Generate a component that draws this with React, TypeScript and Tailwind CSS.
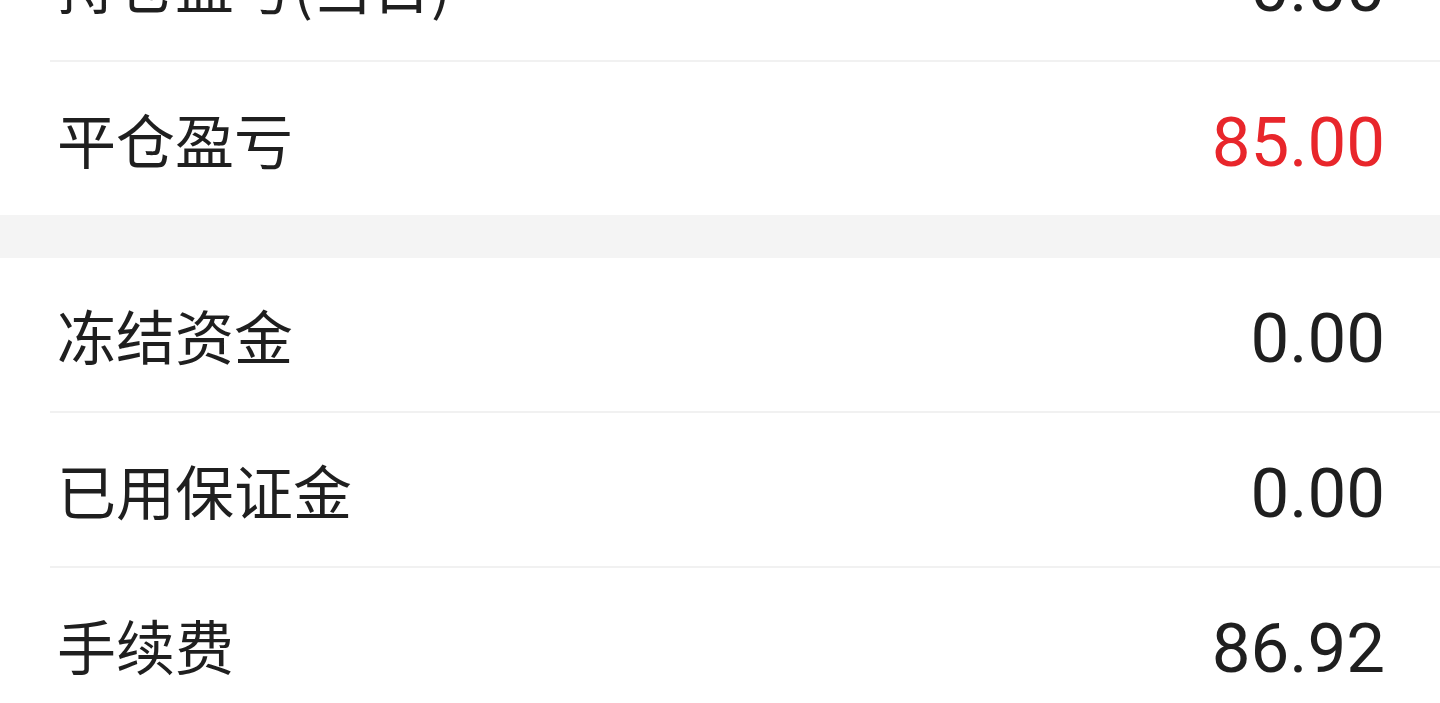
export default function App() {
  const top = [
    { label: "持仓盈亏(当日)", value: "0.00", red: false },
    { label: "平仓盈亏", value: "85.00", red: true },
  ];
  const bottom = [
    { label: "冻结资金", value: "0.00", red: false },
    { label: "已用保证金", value: "0.00", red: false },
    { label: "手续费", value: "86.92", red: false },
  ];

  const Row = ({ label, value, red, line }: { label: string; value: string; red: boolean; line: boolean }) => (
    <div className="flex flex-col">
      <div className="flex h-[153px] items-center justify-between pl-[57px] pr-[55px]">
        <span className="text-[59px] leading-none text-[#1f1f1f] [font-family:'Noto_Sans_CJK_SC',sans-serif]">
          {label}
        </span>
        <span
          className={
            "pt-[8px] text-[69px] leading-none [font-family:Roboto,'Noto_Sans',sans-serif] " +
            (red ? "text-[#e8262b]" : "text-[#1f1f1f]")
          }
        >
          {value}
        </span>
      </div>
      {line && <div className="ml-[50px] h-[2px] bg-[#f1f1f1]" />}
    </div>
  );

  return (
    <div className="h-[703px] w-[1440px] overflow-hidden bg-white">
      <div className="-mt-[93px]">
        {top.map((r, i) => (
          <Row key={r.label} {...r} line={i < top.length - 1} />
        ))}
      </div>
      <div className="h-[43px] bg-[#f4f4f4]" />
      {bottom.map((r, i) => (
        <Row key={r.label} {...r} line={i < bottom.length - 1} />
      ))}
    </div>
  );
}
